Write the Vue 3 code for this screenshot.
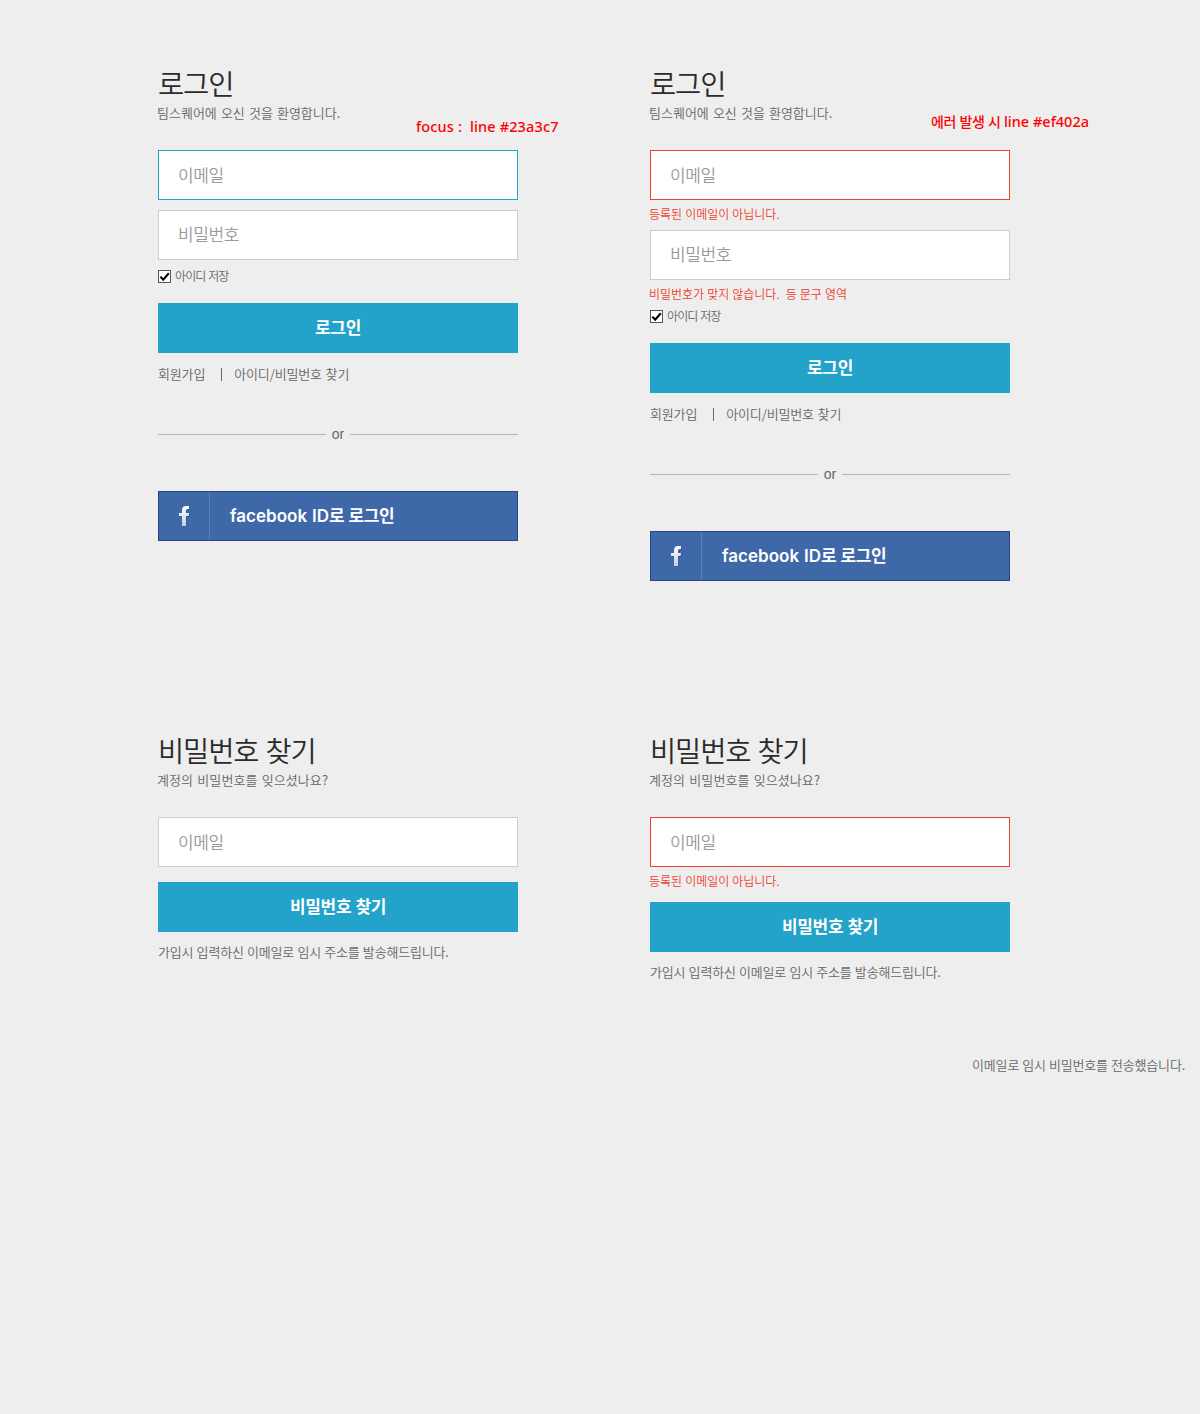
<script setup>
const loginPanels = [
  { id: 'focus', noteLabel: '', note: 'focus :  line #23a3c7', emailState: 'focused' },
  {
    id: 'invalid',
    noteLabel: '에러 발생 시 ',
    note: 'line #ef402a',
    emailState: 'invalid',
    emailError: '등록된 이메일이 아닙니다.',
    passwordError: '비밀번호가 맞지 않습니다.  등 문구 영역',
  },
]
const findPanels = [
  { id: 'default', emailState: '' },
  { id: 'invalid', emailState: 'invalid', emailError: '등록된 이메일이 아닙니다.' },
]
</script>

<template>
  <main class="page">
    <div class="panels">
      <section v-for="p in loginPanels" :key="p.id" class="panel">
        <h1 class="title">로그인</h1>
        <p class="lead">팀스퀘어에 오신 것을 환영합니다.</p>
        <span class="note" :class="'note-' + p.id"><em v-if="p.noteLabel">{{ p.noteLabel }}</em>{{ p.note }}</span>
        <div class="field" :class="p.emailState"><span>이메일</span></div>
        <p v-if="p.emailError" class="error">{{ p.emailError }}</p>
        <div v-else class="gap"></div>
        <div class="field password"><span>비밀번호</span></div>
        <p v-if="p.passwordError" class="error">{{ p.passwordError }}</p>
        <div v-else class="gap"></div>
        <div class="save">
          <svg width="13" height="13" viewBox="0 0 13 13">
            <rect x=".5" y=".5" width="12" height="12" fill="#fff" stroke="#555" />
            <path d="M2.400 6.600 L5.200 9.700 L10.800 3.200" fill="none" stroke="#000" stroke-width="2.100" />
          </svg>
          <span>아이디 저장</span>
        </div>
        <div class="submit"><span>로그인</span></div>
        <nav class="links">
          <span>회원가입</span><i></i><span>아이디/비밀번호 찾기</span>
        </nav>
        <div class="divider"><span>or</span></div>
        <div class="facebook">
          <div class="fb-icon">
            <svg width="14" height="24" viewBox="0 0 14 24">
              <defs>
                <linearGradient :id="'fb-' + p.id" x1="0" y1="0" x2="0" y2="1">
                  <stop offset="0" stop-color="#fff" />
                  <stop offset="1" stop-color="#c3cfe2" />
                </linearGradient>
              </defs>
              <path d="M6 23V13H3V10H6V7.500Q6 3 10 3H13V6H11.500Q10 6 10 8V10H13L12.500 13H10V23Z" fill="#2b4c85" opacity=".5" />
              <path d="M5 22V12H2V9H5V6.500Q5 2 9 2H12V5H10.500Q9 5 9 7V9H12L11.500 12H9V22Z" :fill="`url(#fb-${p.id})`" />
            </svg>
          </div>
          <span class="fb-label"><b>facebook ID</b>로 로그인</span>
        </div>
      </section>

      <section v-for="p in findPanels" :key="'find-' + p.id" class="panel">
        <h1 class="title">비밀번호 찾기</h1>
        <p class="lead question">계정의 비밀번호를 잊으셨나요?</p>
        <div class="field" :class="p.emailState"><span>이메일</span></div>
        <p v-if="p.emailError" class="error find-error">{{ p.emailError }}</p>
        <div v-else class="gap find-gap"></div>
        <div class="submit find"><span>비밀번호 찾기</span></div>
        <p class="hint">가입시 입력하신 이메일로 임시 주소를 발송해드립니다.</p>
      </section>
    </div>
    <p class="sent">이메일로 임시 비밀번호를 전송했습니다.</p>
  </main>
</template>

<style>
body {
  background: #eee;
}
</style>

<style scoped>
.page {
  box-sizing: border-box;
  height: 1414px;
  padding-top: 66px;
  background: #eee;
  color: #666;
  font-family: 'Noto Sans CJK KR', sans-serif;
  font-weight: 350;
}
.panels {
  display: grid;
  grid-template-columns: 360px 360px;
  grid-auto-rows: 667px;
  column-gap: 132px;
  margin-left: 158px;
  height: 984px;
}
.panel {
  position: relative;
  white-space: pre;
}
.title,
.lead,
.error,
.hint,
.sent {
  margin: 0;
}
.title {
  height: 38px;
  line-height: 34px;
  font-size: 28.5px;
  font-weight: 350;
  letter-spacing: -1.15px;
  word-spacing: 2px;
  color: #2b2b2b;
}
.lead {
  height: 46px;
  margin-left: -1px;
  line-height: 18px;
  font-size: 13px;
  word-spacing: 1.2px;
}
.question {
  letter-spacing: 0.08px;
}
.note {
  position: absolute;
  color: #f00;
  font: 500 14.5px/20px 'Noto Sans', 'Noto Sans CJK KR', sans-serif;
}
.note em {
  font-style: normal;
  font-size: 14px;
  letter-spacing: -0.3px;
}
.note-focus {
  left: 258px;
  top: 50px;
  letter-spacing: 0.15px;
}
.note-invalid {
  left: 281px;
  top: 45px;
}
.field {
  box-sizing: border-box;
  height: 50px;
  padding-left: 19px;
  border: 1px solid #ccc;
  background: #fff;
  color: #999;
  font-size: 17px;
  line-height: 48px;
  letter-spacing: -0.4px;
}
.field.password {
  line-height: 46px;
}
.field.focused {
  border-color: #23a3c7;
}
.field.invalid {
  border-color: #ef402a;
}
.gap {
  height: 10px;
}
.error {
  height: 30px;
  margin-left: -1px;
  line-height: 28px;
  font-size: 12px;
  letter-spacing: -0.04px;
  word-spacing: 0.5px;
  color: #ef402a;
}
.find-gap {
  height: 15px;
}
.find-error {
  height: 35px;
}
.save {
  display: flex;
  align-items: center;
  gap: 4px;
  height: 13px;
  margin-bottom: 20px;
  font-size: 12px;
  letter-spacing: -0.9px;
  word-spacing: 1px;
}
.save svg {
  flex: none;
}
.save span {
  padding-bottom: 2px;
}
.submit {
  height: 50px;
  background: #23a3c9;
  color: #fff;
  text-align: center;
  line-height: 47px;
  font-size: 17px;
  font-weight: 700;
  letter-spacing: -0.35px;
  word-spacing: 0.7px;
}
.links {
  display: flex;
  align-items: center;
  height: 43px;
  font-size: 13px;
  letter-spacing: -0.15px;
  word-spacing: 1px;
}
.links span {
  padding-bottom: 2px;
}
.links i {
  width: 1px;
  height: 13px;
  margin: 0 12px 0 16px;
  background: #666;
}
.divider {
  display: flex;
  align-items: center;
  justify-content: space-between;
  height: 20px;
  margin: 28px 0 47px;
  font: 14px 'Liberation Sans', sans-serif;
}
.divider::before,
.divider::after {
  content: '';
  width: 168px;
  height: 1px;
  background: #b5b5b5;
}
.facebook {
  box-sizing: border-box;
  display: flex;
  height: 50px;
  border: 1px solid #25478a;
  background: #3f68a9;
  color: #fff;
}
.fb-icon {
  display: flex;
  align-items: center;
  justify-content: center;
  width: 51px;
  box-sizing: border-box;
  border-right: 1px solid #5b80bb;
}
.fb-label {
  margin-left: 20px;
  line-height: 46px;
  font-size: 17px;
  font-weight: 700;
  letter-spacing: -0.35px;
  word-spacing: 0.6px;
}
.fb-label b {
  font-family: Inter, sans-serif;
  font-weight: 600;
  letter-spacing: 0.02px;
}
.hint {
  line-height: 40px;
  font-size: 13px;
  letter-spacing: -0.19px;
  word-spacing: 0.6px;
}
.sent {
  padding-right: 15px;
  text-align: right;
  line-height: 30px;
  font-size: 13px;
  letter-spacing: -0.18px;
  word-spacing: 0.4px;
}
</style>
